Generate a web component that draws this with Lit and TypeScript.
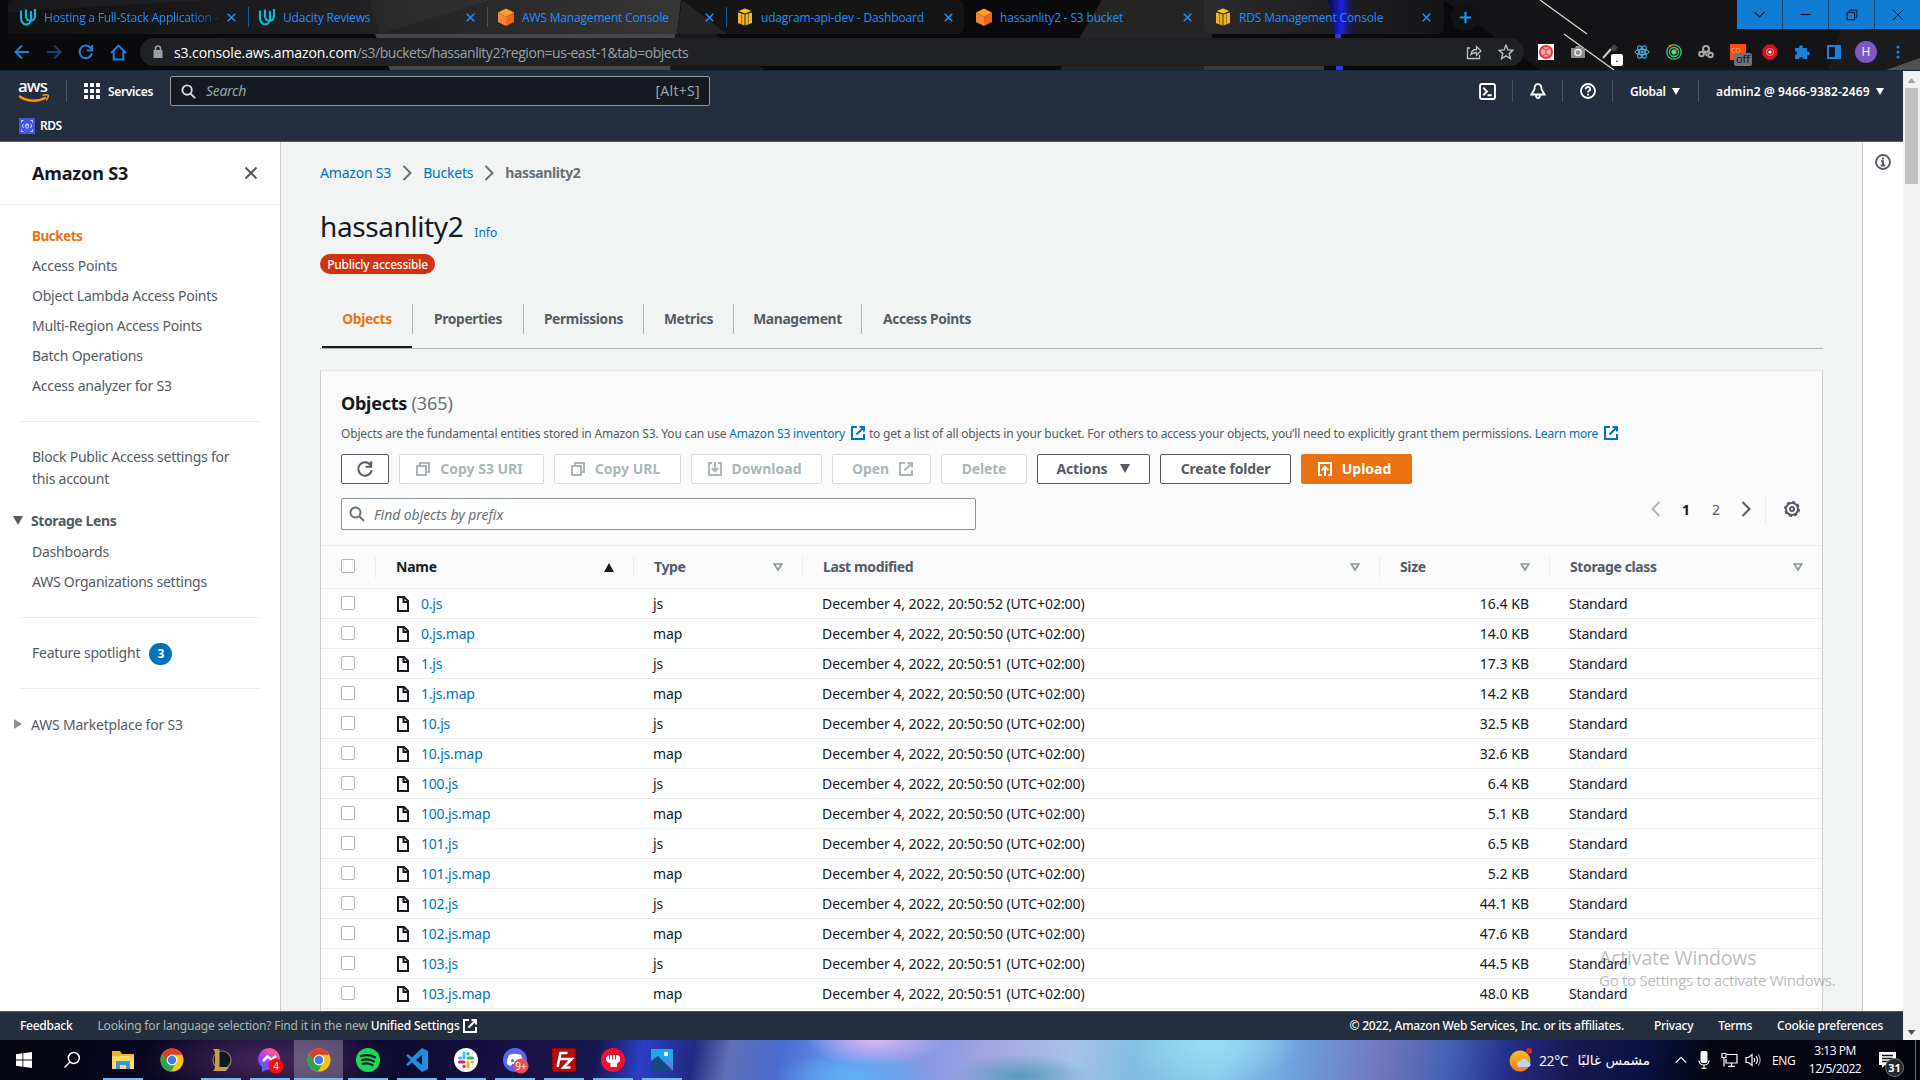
import { LitElement, html, svg, css } from "lit";
import { customElement } from "lit/decorators.js";

const stroke = (d: string, size = 16, width = 2) => html`<svg class="ic" width=${size} height=${size} viewBox="0 0 16 16" fill="none" stroke="currentColor" stroke-width=${width}><path d=${d}></path></svg>`;

const P = {
  external: "M7 2H2v12h12V9M9.5 2H14v4.5M14 2L6.5 9.5",
  copy: "M2 5h9v9H2zM5 5V2h9v9h-3",
  download: "M5 2H2v12h12V2h-3M8 1v9M4.7 7L8 10.3 11.300 7",
  upload: "M5 14H2V2h12v12h-3M8 15V6M4.700 9.200L8 6l3.300 3.200",
  close: "M2.500 2.500l11 11M13.500 2.500l-11 11",
  right: "M4.500 1l7 7-7 7",
  left: "M11.500 1l-7 7 7 7",
  search: "M6.500 1.500a5 5 0 1 0 0 10 5 5 0 0 0 0-10zM10.200 10.200L15 15",
};

const shared = css`
  * { box-sizing: border-box; }
  :host { font-family: "Noto Sans", "Open Sans", sans-serif; }
  .row { display: flex; align-items: center; }
  .ic { display: block; flex: none; }
  .grow { flex: 1; }
`;

/* Browser frame: tabs, toolbar */

const favicon = (kind: string) => {
  if (kind === "udacity") return html`<svg class="ic" width="18" height="18" viewBox="0 0 18 18" fill="none" stroke="#12b5da" stroke-width="2.200"><path d="M2 2.500v7c0 4.500 2.500 7 5 7s5-2 5-6V3"></path><path d="M7 1.500v6.500c0 3 2 4.800 4.500 4.800S16 11 16 8V1"></path></svg>`;
  if (kind === "cube") return html`<svg class="ic" width="18" height="18" viewBox="0 0 18 18"><path d="M9 .5l8 4L9 9 1 4.500z" fill="#ff9d2e"></path><path d="M1 4.500L9 9v9l-8-4z" fill="#f58536"></path><path d="M17 4.500L9 9v9l8-4z" fill="#f0641e"></path></svg>`;
  return html`<svg class="ic" width="18" height="18" viewBox="0 0 18 18"><path d="M9 .5L15.500 3 9 5.500 2.500 3z" fill="#ffc400"></path><path d="M2 4.500l3.500 1v11L2 15zM16 4.500l-3.500 1v11L16 15z" fill="#f3b32a"></path><path d="M5.800 5.500l2.800 1v11l-2.800-1zM12.200 5.500l-2.800 1v11l2.800-1z" fill="#f0ad25"></path></svg>`;
};

const tabs = [
  ["udacity", "Hosting a Full-Stack Application -"],
  ["udacity", "Udacity Reviews"],
  ["cube", "AWS Management Console"],
  ["box", "udagram-api-dev - Dashboard"],
  ["cube", "hassanlity2 - S3 bucket"],
  ["box", "RDS Management Console"],
];

@customElement("browser-frame")
class BrowserFrame extends LitElement {
  static styles = [shared, css`
    :host { display: block; position: relative; height: 71px; background: #0a090b; border-bottom: 1px solid #0c2a41; overflow: hidden; font-family: "Open Sans", "Noto Sans", sans-serif; }
    .art { position: absolute; inset: 0; }
    .strip { position: relative; height: 34px; padding-left: 10px; }
    .tab { width: 239px; height: 34px; padding: 0 8px 0 9px; color: #1e90ff; font-size: 12px; flex: none; position: relative; }
    .tab.sep::after { content: ""; position: absolute; right: 0; top: 7px; width: 1px; height: 20px; background: #14609f; }
    .label { margin-left: 7px; width: 176px; white-space: nowrap; overflow: hidden; letter-spacing: -0.17px; }
    .fade { -webkit-mask-image: linear-gradient(90deg, #000 145px, transparent 185px); letter-spacing: -0.22px; }
    .x { margin-left: 6px; color: #1b8ff0; }
    .plus { width: 28px; height: 28px; margin-left: 7px; border-radius: 50%; background: #111214; color: #1e90ff; display: flex; align-items: center; justify-content: center; }
    .win { align-self: flex-start; gap: 1px; background: #0a4676; height: 29px; }
    .win span { width: 45px; height: 29px; background: #0f7dd3; display: flex; align-items: center; justify-content: center; color: #06111c; }
    .bar { position: relative; height: 36px; padding: 0 14px; color: #1a82d8; }
    .nav { width: 126px; gap: 16px; }
    .omni { height: 28px; width: 1384px; border-radius: 14px; background: #202124; padding: 0 10px 0 11px; font-size: 14px; color: #9aa0a6; letter-spacing: -0.46px; }
    .omni b { font-weight: 400; color: #fff; letter-spacing: -0.1px; }
    .url { margin-left: 9px; white-space: nowrap; }
    .ends { color: #bdc1c6; gap: 16px; }
    .ext { margin-left: 14px; gap: 16px; }
    .ext > * { width: 16px; height: 16px; flex: none; position: relative; }
    .badge { position: absolute; left: 9px; top: 10px; width: 12px; height: 12px; border-radius: 2px; background: #fff; color: #000; font: 700 8px/9px "Open Sans", sans-serif; text-align: center; }
    .off { left: 4px; top: 9px; width: 18px; height: 13px; background: #6f7378; color: #111; font: 11px/12px "Open Sans", sans-serif; }
    .face { width: 22px; height: 22px; margin: 0 -3px; border-radius: 50%; background: #7e57c2; color: #fff; font-size: 12px; line-height: 22px; text-align: center; }
  `];
  render() {
    return html`
      <svg class="art" width="1920" height="70" viewBox="0 0 1920 70">
        <defs>
          <linearGradient id="g1"><stop offset="0" stop-color="#111113"></stop><stop offset=".5" stop-color="#202022"></stop><stop offset="1" stop-color="#363637"></stop></linearGradient>
          <linearGradient id="g2"><stop offset="0" stop-color="#2b2b2d"></stop><stop offset="1" stop-color="#151416"></stop></linearGradient>
          <linearGradient id="g3"><stop offset="0" stop-color="#0b0a35"></stop><stop offset=".45" stop-color="#1a22e8"></stop><stop offset="1" stop-color="#130f30" stop-opacity="0"></stop></linearGradient>
        </defs>
        <path d="M375 34h305l-10 36H390z" fill="#474748"></path>
        <path d="M675 34h40l50 36h-95z" fill="#19191a"></path>
        <path d="M8 34V8q0-8 8-8h665l-4 34z" fill="url(#g1)"></path>
        <path d="M8 12l200-12H8zM370 0h120l-110 34z" fill="#fff" fill-opacity=".035"></path>
        <path d="M682 0h274q8 0 8 8v18q0 8-8 8H677z" fill="#151516"></path>
        <path d="M682 0l45 34h-50z" fill="#242425"></path>
        <path d="M1102 0h110v70h-152z" fill="#252526"></path>
        <path d="M1204 0h240v28q-1 6-8 6h-224q-8 0-8-8z" fill="url(#g2)"></path>
        <path d="M1204 66h120v4h-120z" fill="#39393a"></path>
        <path d="M1328 0h26l4 34h-24z" fill="url(#g3)"></path>
        <path d="M1335 34h6l2 36h-7z" fill="#3238e8"></path>
        <path d="M1444 0h476v70h-380z" fill="#141416"></path>
        <path d="M1850 0h70v70h-92z" fill="#1b1b1d"></path>
        <path d="M1886 70l34-12v12z" fill="#515152"></path>
        <path d="M1540 0l47 34M1564 34l50 36" stroke="#d6d6d6" stroke-width="1.300" fill="none"></path>
      </svg>
      <div class="strip row">
        ${tabs.map(([icon, label], i) => html`<div class="tab row ${i < 3 ? "sep" : ""}">
          ${favicon(icon)}<span class="label ${i === 0 ? "fade" : ""}">${label}</span><span class="x">${stroke(P.close, 11, 2.4)}</span></div>`)}
        <span class="plus">${stroke("M8 1v14M1 8h14", 13, 2.6)}</span>
        <span class="grow"></span>
        <div class="win row">
          <span>${stroke("M2 5l6 6 6-6", 13, 1.3)}</span><span>${stroke("M2 8h12", 13, 1.4)}</span>
          <span>${stroke("M1.500 4.500h10v10h-10zM4.500 4.500v-3h10v10h-3", 12, 1.3)}</span><span>${stroke("M1 1l14 14M15 1L1 15", 12, 1.2)}</span>
        </div>
      </div>
      <div class="bar row">
        <div class="nav row">
          ${stroke("M15 8H2M8 1.500L1.500 8 8 14.500", 16, 2)}
          <span style="opacity:.5">${stroke("M1 8h13M8 1.500L14.500 8 8 14.500", 16, 2)}</span>
          ${stroke("M13.500 5A6.300 6.300 0 1 0 14 9.500M14.200 1v5.500H8.800", 16, 2)}
          ${stroke("M1 8.500L8 1.500l7 7M3.500 7v7.500h9V7", 17, 1.9)}
        </div>
        <div class="omni row">
          <svg class="ic" width="14" height="14" viewBox="0 0 14 14"><path d="M2.500 5h9v8h-9z" fill="#9aa0a6"></path><path d="M4.500 6V3.500a2.500 2.500 0 0 1 5 0V6" stroke="#9aa0a6" stroke-width="1.500" fill="none"></path></svg>
          <span class="url"><b>s3.console.aws.amazon.com</b>/s3/buckets/hassanlity2?region=us-east-1&amp;tab=objects</span>
          <span class="grow"></span>
          <div class="ends row">
            ${stroke("M4 4H1.500v10.500h12V11M5 10.500c.3-3.500 2-5 5.500-5V2.500L15 7l-4.500 4.300V8.500C8 8.500 6.500 9 5 10.500z", 16, 1.3)}
            ${stroke("M8 1.200l2 4.700 5 .4-3.800 3.300 1.200 4.900L8 11.800l-4.400 2.700 1.200-4.900L1 6.300l5-.4z", 16, 1.400)}
          </div>
        </div>
        <div class="ext row">
          <svg viewBox="0 0 16 16"><path fill="#fff" d="M0 0h16v16H0z"></path><circle cx="8" cy="8" r="6" fill="#f6a6a6" stroke="#e33a3a" stroke-width="2"></circle><path d="M4.500 4.500q3.500 3 7 0M4.500 11.500q3.500-3 7 0M8 6.500v3" stroke="#e23434" stroke-width="1" fill="none"></path></svg>
          <svg viewBox="0 0 16 16"><path d="M1 4h4l1-2h4l1 2h4v10H1z" fill="#8d8d8f"></path><circle cx="8" cy="8.500" r="3" fill="none" stroke="#eee" stroke-width="1.500"></circle></svg>
          <span><svg class="ic" width="16" height="16" viewBox="0 0 16 16"><path d="M1 14l8-9" stroke="#ccc" stroke-width="2"></path><path d="M8 4l4-4 4 4-4 4z" fill="#444"></path></svg><span class="badge">.</span></span>
          <svg viewBox="0 0 16 16" fill="none" stroke="#4fc3f0"><ellipse cx="8" cy="8" rx="7" ry="2.700"></ellipse><ellipse cx="8" cy="8" rx="7" ry="2.700" transform="rotate(60 8 8)"></ellipse><ellipse cx="8" cy="8" rx="7" ry="2.700" transform="rotate(120 8 8)"></ellipse><circle cx="8" cy="8" r="1" fill="#4fc3f0"></circle></svg>
          <svg viewBox="0 0 16 16" fill="none" stroke="#3fce7a" stroke-width="1.300"><circle cx="8" cy="8" r="7.200"></circle><circle cx="8" cy="8" r="4.500"></circle><circle cx="8" cy="8" r="2" fill="#5df09a"></circle><circle cx="4" cy="2" r="1.300" fill="#ff6a2a" stroke="none"></circle><circle cx="11" cy="5" r="1.200" fill="#ff6a2a" stroke="none"></circle></svg>
          <svg viewBox="0 0 16 16" fill="none" stroke="#a9a9ab" stroke-width="2"><circle cx="3.500" cy="10" r="2.300"></circle><circle cx="8" cy="5" r="3"></circle><circle cx="12.500" cy="11" r="2.300"></circle><path d="M6 7l3 5M10 7l3 2" stroke-width="1.500"></path></svg>
          <span><svg class="ic" width="16" height="16" viewBox="0 0 16 16"><path fill="#ff4b0f" d="M0 0h16v16H0z"></path><text x="1" y="9" font-size="9" fill="#ff9b6a">co</text></svg><span class="badge off">off</span></span>
          <svg viewBox="0 0 16 16"><path d="M5 .500h6L15.500 5v6L11 15.500H5L.500 11V5z" fill="#d3141c"></path><circle cx="8" cy="8" r="3.600" fill="none" stroke="#fff" stroke-opacity=".5"></circle><circle cx="8" cy="8" r="1.600" fill="#fff"></circle></svg>
          <svg viewBox="0 0 16 16" fill="#1a82d8"><path d="M1 4h4.200a2 2 0 1 1 3.600 0H13v3.700a2 2 0 1 1 0 3.600V15H9.200a2 2 0 0 0-4 0H1v-4a2 2 0 0 0 0-4z"></path></svg>
          <svg viewBox="0 0 16 16"><path d="M2 2h12v12H2z" fill="none" stroke="#1a82d8" stroke-width="2"></path><path d="M9 2h5v12H9z" fill="#1a82d8"></path></svg>
          <span class="face">H</span>
          <svg viewBox="0 0 16 16" fill="#1a82d8"><circle cx="8" cy="3" r="1.600"></circle><circle cx="8" cy="8" r="1.600"></circle><circle cx="8" cy="13" r="1.600"></circle></svg>
        </div>
      </div>`;
  }
}

/* AWS console header */

@customElement("console-header")
class ConsoleHeader extends LitElement {
  static styles = [shared, css`
    :host { display: block; height: 71px; background: #232f3e; border-bottom: 1px solid #545b64; color: #fff; font-size: 12px; font-weight: 600; }
    .top { height: 40px; padding-left: 18px; }
    .line { width: 1px; height: 22px; background: #48535f; flex: none; }
    .services { margin: 0 17px 0 8px; width: 45px; white-space: nowrap; letter-spacing: -0.35px; }
    .search { width: 540px; height: 30px; border: 1px solid #8f9a9b; border-radius: 2px; background: #161922; padding: 0 9px 0 10px; font-size: 14px; font-weight: 400; color: #95a5a6; }
    .search i, .search span { padding-bottom: 2px; }
    .search i { margin-left: 10px; letter-spacing: -0.3px; }
    .key { letter-spacing: 0.3px; }
    .search .ic { color: #d5dbdb; }
    .tool { width: 49px; display: flex; justify-content: center; }
    .txt { white-space: nowrap; letter-spacing: -0.3px; }
    .account { width: 155px; letter-spacing: 0.12px; }
    .caret { width: 0; height: 0; border: 4px solid transparent; border-top: 7px solid #fff; border-bottom: 0; margin-left: 7px; }
    .fav { height: 30px; padding-left: 19px; gap: 5px; letter-spacing: -0.5px; }
    .fav span { padding-bottom: 1px; }
  `];
  render() {
    return html`
      <div class="top row">
        <svg class="ic" width="32" height="24" viewBox="0 0 32 24" overflow="visible"><text x="0" y="13" font-size="17" font-weight="500" textLength="30" fill="#fff" font-family="Noto Sans">aws</text><path d="M1 17c8 6 19 6 27 1.500" stroke="#ff9900" stroke-width="2.200" fill="none"></path><path d="M24.500 16.500c3-1 5-1 5.500-.3s-.2 3-1.800 5" stroke="#ff9900" stroke-width="1.600" fill="none"></path></svg>
        <span class="line" style="margin:0 17px 0 16px"></span>
        <svg class="ic" width="16" height="16" viewBox="0 0 16 16" fill="#fff">${[0, 6, 12].map(y => [0, 6, 12].map(x => svg`<rect x=${x} y=${y} width="4" height="4" rx=".5"></rect>`))}</svg>
        <span class="services">Services</span>
        <div class="search row">${stroke(P.search, 15, 2)}<i>Search</i><span class="grow"></span><span class="key">[Alt+S]</span></div>
        <span class="grow"></span>
        <span class="tool"><svg class="ic" width="17" height="17" viewBox="0 0 16 16" fill="none" stroke="#fff" stroke-width="1.800"><rect x="1" y="1" width="14" height="14" rx="1.500"></rect><path d="M4 4.500L7.500 8 4 11.500M8 11.500h4"></path></svg></span>
        <span class="line"></span>
        <span class="tool"><svg class="ic" width="16" height="16" viewBox="0 0 16 16" fill="none" stroke="#fff" stroke-width="1.800"><path d="M8 1.200c-3 0-3.500 2-3.500 5L1.500 11.500h13l-3-5.300c0-3-.500-5-3.500-5zM6 12c0 4 4 4 4 0"></path></svg></span>
        <span class="line"></span>
        <span class="tool"><svg class="ic" width="16" height="16" viewBox="0 0 16 16" fill="none" stroke="#fff" stroke-width="1.800"><circle cx="8" cy="8" r="7"></circle><path d="M5.700 6.300c0-3.300 4.800-2.800 4.500 0C10 8 8 7.700 8 9.500M8 10.800v1.600"></path></svg></span>
        <span class="line"></span>
        <span class="txt" style="width:35px;margin-left:17px">Global</span><span class="caret"></span>
        <span class="line" style="margin:0 17px 0 18px"></span>
        <span class="txt account">admin2 @ 9466-9382-2469</span><span class="caret" style="margin-right:19px;margin-left:5px"></span>
      </div>
      <div class="fav row">
        <svg class="ic" width="16" height="16" viewBox="0 0 16 16"><path fill="#4257e6" d="M0 0h16v16H0z"></path><g fill="none" stroke="#dfe4ff" stroke-width=".9"><path d="M2.500 4.500v-2h2M11.500 2.500h2v2M2.500 11.500v2h2M11.500 13.500h2v-2M4.500 6l-1.200 2 1.200 2M11.500 6l1.200 2-1.200 2"></path><ellipse cx="8" cy="6.500" rx="1.400" ry=".7"></ellipse><path d="M6.600 6.500v3c0 .9 2.800.9 2.800 0v-3"></path></g></svg>
        <span>RDS</span>
      </div>`;
  }
}

/* Left navigation */

@customElement("side-nav")
class SideNav extends LitElement {
  static styles = [shared, css`
    :host { display: block; width: 281px; flex: none; background: #fff; border-right: 1px solid #c9cfcf; color: #545b64; font-size: 14px; letter-spacing: -0.23px; }
    .head { height: 63px; padding: 0 21px 0 32px; border-bottom: 1px solid #eaeded; color: #16191f; font-size: 18px; font-weight: 700; letter-spacing: -0.15px; margin-bottom: 16px; }
    .head span { padding-bottom: 1px; }
    .head .ic { color: #545b64; }
    .item { height: 30px; line-height: 30px; padding-left: 32px; white-space: nowrap; }
    .on { color: #ec7211; font-weight: 700; font-size: 13.500px; letter-spacing: -0.5px; }
    hr { border: 0; height: 1px; background: #eaeded; margin: 20px 20px; }
    .two { padding: 4px 0 0 32px; line-height: 22px; margin-bottom: 15px; }
    .group { height: 31px; gap: 8px; padding-left: 13px; font-weight: 700; letter-spacing: -0.4px; margin-bottom: 1px; }
    .plain { font-weight: 400; height: 30px; letter-spacing: -0.2px; }
    .n { display: inline-block; width: 23px; height: 22px; line-height: 22px; border-radius: 11px; background: #0073bb; color: #fff; font-size: 12px; font-weight: 700; text-align: center; margin-left: 9px; }
  `];
  render() {
    return html`
      <div class="head row"><span class="grow">Amazon S3</span>${stroke(P.close, 16, 2)}</div>
      <div class="item on">Buckets</div>
      ${["Access Points", "Object Lambda Access Points", "Multi-Region Access Points", "Batch Operations", "Access analyzer for S3"].map(t => html`<div class="item">${t}</div>`)}
      <hr>
      <div class="two">Block Public Access settings for<br>this account</div>
      <div class="group row"><svg class="ic" width="10" height="9" viewBox="0 0 10 9"><path d="M0 0h10L5 9z" fill="#545b64"></path></svg>Storage Lens</div>
      <div class="item">Dashboards</div><div class="item">AWS Organizations settings</div>
      <hr>
      <div class="item">Feature spotlight<span class="n">3</span></div>
      <hr>
      <div class="group plain row"><svg class="ic" width="10" height="10" viewBox="0 0 10 10"><path d="M1 0v10l8-5z" fill="#879596"></path></svg>AWS Marketplace for S3</div>`;
  }
}

/* Objects table */

const objects: [string, string, string][] = [
  ["0.js", "52", "16.4"], ["0.js.map", "50", "14.0"], ["1.js", "51", "17.3"], ["1.js.map", "50", "14.2"],
  ["10.js", "50", "32.5"], ["10.js.map", "50", "32.6"], ["100.js", "50", "6.4"], ["100.js.map", "50", "5.1"],
  ["101.js", "50", "6.5"], ["101.js.map", "50", "5.2"], ["102.js", "50", "44.1"], ["102.js.map", "50", "47.6"],
  ["103.js", "51", "44.5"], ["103.js.map", "51", "48.0"],
];

@customElement("object-table")
class ObjectTable extends LitElement {
  static styles = [shared, css`
    :host { display: block; font-size: 14px; color: #16191f; }
    .line { display: grid; grid-template-columns: 55px 258px 169px 577px 170px 1fr; height: 30px; border-bottom: 1px solid #eaeded; background: #fff; align-items: center; white-space: nowrap; }
    .head { height: 44px; border-top: 1px solid #eaeded; background: #fafafa; color: #545b64; font-weight: 700; }
    .head > div { height: 21px; border-right: 1px solid #eaeded; padding: 0 19px 0 20px; display: flex; align-items: center; justify-content: space-between; letter-spacing: -0.38px; }
    .head > div:last-child { border: 0; padding-right: 19px; }
    .head > div span { padding-bottom: 1px; }
    .head .name { color: #16191f; letter-spacing: -0.2px; }
    .line > .sel { padding-left: 20px; }
    .box { width: 14px; height: 14px; border: 1px solid #aab7b8; border-radius: 2px; background: #fff; display: block; margin-top: -1px; }
    .head .box { margin-top: -2px; padding: 0; }
    .cell { padding-left: 19px; letter-spacing: -0.05px; }
    .std { letter-spacing: -0.18px; }
    .key { padding-left: 20px; color: #0073bb; display: flex; align-items: center; gap: 11px; letter-spacing: -0.2px; }
    .num { text-align: right; padding-right: 21px; }
  `];
  tri = html`<svg class="ic" width="10" height="8" viewBox="0 0 10 8"><path d="M1.300 1h7.400L5 7z" fill="none" stroke="#879596" stroke-width="1.700"></path></svg>`;
  render() {
    return html`
      <div class="line head">
        <div class="sel"><span class="box"></span></div>
        <div class="name"><span>Name</span><svg class="ic" width="10" height="9" viewBox="0 0 10 9"><path d="M0 9h10L5 0z" fill="#16191f"></path></svg></div>
        ${["Type", "Last modified", "Size", "Storage class"].map(t => html`<div><span>${t}</span>${this.tri}</div>`)}
      </div>
      ${objects.map(([name, sec, size]) => html`<div class="line">
        <div class="sel"><span class="box"></span></div>
        <div class="key"><svg class="ic" width="14" height="16" viewBox="0 0 14 16" fill="none" stroke="#16191f" stroke-width="2"><path d="M2 1h6l4 4v10H2zM7.500 1v5H12"></path></svg>${name}</div>
        <div class="cell">${name.endsWith("map") ? "map" : "js"}</div>
        <div class="cell">December 4, 2022, 20:50:${sec} (UTC+02:00)</div>
        <div class="num">${size} KB</div>
        <div class="cell std">Standard</div></div>`)}
      <div class="line"></div>`;
  }
}

@customElement("bucket-page")
class BucketPage extends LitElement {
  static styles = [shared, css`
    :host { display: block; flex: 1; height: 869px; overflow: hidden; background: #f2f4f4; padding: 19px 39px 0 39px; color: #545b64; font-size: 14px; }
    a { color: #0073bb; }
    .crumbs { height: 22px; gap: 8px; margin-bottom: 25px; letter-spacing: -0.2px; }
    .crumbs .ic { color: #687078; position: relative; top: 1px; }
    .crumbs b { letter-spacing: -0.4px; color: #687078; }
    .title { height: 36px; display: flex; align-items: baseline; gap: 11px; line-height: 36px; font-size: 28px; color: #16191f; letter-spacing: -0.4px; }
    .title a { font-size: 12px; letter-spacing: 0; }
    .pill { display: flex; align-items: center; justify-content: center; width: 115px; height: 20px; margin-top: 10px; border-radius: 10px; background: #d13212; color: #fff; font-size: 12px; font-weight: 500; letter-spacing: -0.25px; }
    .tabs { display: flex; height: 59px; margin-top: 16px; border-bottom: 1px solid #aab7b8; padding-left: 2px; }
    .tabs span { display: flex; align-items: center; justify-content: center; height: 30px; margin-top: 14px; padding-bottom: 2px; border-right: 1px solid #aab7b8; font-weight: 700; font-size: 13.800px; letter-spacing: -0.35px; white-space: nowrap; }
    .tabs span:last-child { border: 0; }
    .tabs .on { color: #ec7211; position: relative; }
    .tabs .on::after { content: ""; position: absolute; left: 0; right: 0; top: 42px; height: 2px; background: #16191f; }
    .card { margin-top: 21px; border: 1px solid #c9cfcf; border-top-color: #e3e7e7; background: #fafafa; }
    .head { padding: 20px 20px 0; height: 174px; }
    h2 { margin: 0; font-size: 18px; line-height: 24px; color: #16191f; letter-spacing: -0.25px; }
    h2 span { font-weight: 400; color: #687078; letter-spacing: -0.1px; }
    .desc { height: 18px; margin: 9px 0 12px; font-size: 12px; white-space: nowrap; letter-spacing: -0.18px; }
    .desc .ic { margin: 0 3px 0 5px; color: #0073bb; }
    .desc a, .desc span { white-space: pre; }
    .buttons { display: flex; gap: 10px; }
    .btn { height: 30px; border: 1px solid #545b64; border-radius: 2px; background: #fff; display: flex; align-items: center; justify-content: center; gap: 9px; font-weight: 700; white-space: nowrap; letter-spacing: -0.15px; padding-bottom: 1px; }
    .dis { color: #aab7b8; border-color: #d5dbdb; }
    .lead { padding-right: 5px; letter-spacing: 0; }
    .trail { padding-left: 3px; }
    .acts { gap: 11px; }
    .up { background: #ec7211; border-color: #ec7211; color: #fff; }
    .filter { margin-top: 10px; align-items: flex-start; }
    .input { width: 635px; height: 32px; margin-top: 4px; border: 1px solid #879596; border-radius: 2px; background: #fff; padding-left: 7px; font-style: italic; color: #687078; gap: 9px; letter-spacing: -0.07px; }
    .pages { height: 30px; }
    .pages span { width: 30px; text-align: center; display: flex; justify-content: center; }
    .pages .cur { font-weight: 700; color: #16191f; }
    .gear { margin: 0 2px 0 18px; }
    .bar { width: 1px; height: 30px; background: #eaeded; margin-left: 4px; }
  `];
  render() {
    const btn = (w: number, label: unknown, cls = "") => html`<span class="btn ${cls}" style="width:${w}px">${label}</span>`;
    const tab = (w: number, t: string, cls = "") => html`<span class=${cls} style="width:${w}px">${t}</span>`;
    return html`
      <div class="crumbs row"><a>Amazon S3</a>${stroke(P.right, 16, 2)}<a>Buckets</a>${stroke(P.right, 16, 2)}<b>hassanlity2</b></div>
      <div class="title">hassanlity2<a>Info</a></div>
      <div class="pill">Publicly accessible</div>
      <div class="tabs">${tab(91, "Objects", "on")}${tab(111, "Properties")}${tab(120, "Permissions")}${tab(90, "Metrics")}${tab(128, "Management")}${tab(130, "Access Points")}</div>
      <div class="card">
        <div class="head">
          <h2>Objects <span>(365)</span></h2>
          <div class="desc row"><span>Objects are the fundamental entities stored in Amazon S3. You can use </span><a>Amazon S3 inventory</a>${stroke(P.external, 16, 2)}<span>to get a list of all objects in your bucket. For others to access your objects, you’ll need to explicitly grant them permissions. </span><a>Learn more</a>${stroke(P.external, 16, 2)}</div>
          <div class="buttons">
            ${btn(48, stroke("M13 4.500A6 6 0 1 0 14 9M13.500 1v5H8.500", 18, 1.8))}
            ${btn(145, html`${stroke(P.copy, 16, 2)}Copy S3 URI`, "dis lead")}
            ${btn(127, html`${stroke(P.copy, 16, 2)}Copy URL`, "dis lead")}
            ${btn(131, html`${stroke(P.download, 16, 2)}Download`, "dis lead")}
            ${btn(99, html`Open${stroke(P.external, 16, 2)}`, "dis trail")}
            ${btn(86, "Delete", "dis")}
            ${btn(113, html`Actions<svg class="ic" width="12" height="9" viewBox="0 0 12 9"><path d="M1 0h10L6 9z" fill="#545b64"></path></svg>`, "acts")}
            ${btn(131, "Create folder")}
            ${btn(111, html`${stroke(P.upload, 16, 2)}Upload`, "up lead")}
          </div>
          <div class="filter row">
            <div class="input row">${stroke(P.search, 16, 2)}Find objects by prefix</div>
            <span class="grow"></span>
            <div class="pages row">
              <span style="color:#aab7b8">${stroke(P.left, 16, 2)}</span><span class="cur">1</span><span>2</span><span>${stroke(P.right, 16, 2)}</span>
              <i class="bar"></i>
              <svg class="ic gear" width="16" height="16" viewBox="0 0 16 16" fill="none" stroke="#545b64"><circle cx="8" cy="8" r="6" stroke-width="2"></circle><circle cx="8" cy="8" r="7.200" stroke-width="1.600" stroke-dasharray="3.200 2.450"></circle><circle cx="8" cy="8" r="2" stroke-width="2"></circle></svg>
            </div>
          </div>
        </div>
        <object-table></object-table>
      </div>`;
  }
}

/* Windows taskbar */

const chrome = svg`<circle cx="12" cy="12" r="11.500" fill="#fbc116"></circle><path d="M12 .5A11.500 11.500 0 0 1 22.200 6.800H12L7 14.500 2 6.300A11.500 11.500 0 0 1 12 .5z" fill="#e33b2e"></path><path d="M2 6.300A11.500 11.500 0 0 0 11 23.400l5-9L7.500 14.500z" fill="#2ba24c"></path><circle cx="12" cy="12" r="5.400" fill="#fff"></circle><circle cx="12" cy="12" r="4.200" fill="#3b7ded"></circle>`;

const apps = [
  svg`<path d="M1 3h8l2 3h12v15H1z" fill="#f2b12c"></path><path d="M1 8h22v13H1z" fill="#ffd968"></path><path d="M5 21v-8h14v8h-4v-4H9v4z" fill="#3a97dd"></path>`,
  chrome,
  svg`<circle cx="13" cy="12" r="9" fill="#071a26" stroke="#a9813c" stroke-width="1.200"></circle><path d="M4 1h6.500v18H20l-3 4H4l2-3V4z" fill="#c99b4a"></path>`,
  svg`<defs><linearGradient id="m" x1="0" y1="1" x2=".6" y2="0"><stop offset="0" stop-color="#1a86ff"></stop><stop offset=".5" stop-color="#a33bff"></stop><stop offset="1" stop-color="#ff5f86"></stop></linearGradient></defs><path d="M12 0a12 11 0 0 0-8 19v5l4-2.300A12 11 0 1 0 12 0z" fill="url(#m)"></path><path d="M5 13l4.500-4.500 4 3L18 8" stroke="#fff" stroke-width="2.500" fill="none"></path><circle cx="18" cy="18" r="7.500" fill="#f5100c"></circle><text x="18" y="21.500" text-anchor="middle" font-size="10" fill="#fff">4</text>`,
  chrome,
  svg`<circle cx="12" cy="12" r="12" fill="#1ed760"></circle><path d="M5 8c5-1.500 10-1 14 1.300M6 12.200c4-1.200 8.500-.8 12 1.200M6.500 16c3.500-1 7-.6 10 1" stroke="#0c1f14" stroke-width="2.200" fill="none" stroke-linecap="round"></path>`,
  svg`<path d="M17 0l6 3v18l-6 3L7 14.500 3 18l-2-1.500L5.500 12 1 7.500 3 6l4 3.500zM17 7l-6 5 6 5z" fill="#1f8fdc"></path>`,
  svg`<circle cx="12" cy="12" r="12" fill="#fff"></circle><g stroke-width="3" stroke-linecap="round"><path d="M10 5v5" stroke="#36c5f0"></path><path d="M5.500 10H7" stroke="#36c5f0"></path><path d="M14 10h4.500" stroke="#2eb67d"></path><path d="M14 5.500V6" stroke="#2eb67d"></path><path d="M14 14v5" stroke="#ecb22e"></path><path d="M18 14h.500" stroke="#ecb22e"></path><path d="M5.500 14H10" stroke="#e01e5a"></path><path d="M10 18v.500" stroke="#e01e5a"></path></g>`,
  svg`<circle cx="12" cy="12" r="12" fill="#5865f2"></circle><path d="M6 7q6-2.500 12 0 2.500 5 2 9-2 1.500-4 2l-1-2h-6l-1 2q-2-.5-4-2-.5-4 2-9z" fill="#fff"></path><circle cx="9.500" cy="12.500" r="1.500" fill="#5865f2"></circle><circle cx="18" cy="18" r="7.500" fill="#ef4d4d"></circle><text x="18" y="21.500" text-anchor="middle" font-size="10" fill="#fff">9+</text>`,
  svg`<path d="M0 0h24v24H0z" fill="#b30d0d"></path><path d="M0 0h24v24H0z" fill="none" stroke="#600" stroke-width="1.500" stroke-dasharray="2 1.500"></path><path d="M5.500 19L8.500 5h7M7.500 11h6M12.500 11h7l-8 8.500h7" stroke="#fff" stroke-width="2.600" fill="none"></path>`,
  svg`<circle cx="12" cy="12" r="12" fill="#ee1230"></circle><path d="M5 9.500L8 7h9l2 2v4l-3 2.500V19H9.500v-4L7 14.500 5 12z" fill="#fff"></path><path d="M8.500 7v4.500M11.500 7v4.500M14.500 7v4.500" stroke="#ee1230" stroke-width=".9"></path>`,
  svg`<path d="M1 1h22v22H1z" fill="#21a4ea"></path><path d="M13 14l4-3 6 5v7h-6z" fill="#5b80e0"></path><path d="M1 13l7-5 15 15H1z" fill="#134a86"></path><circle cx="16" cy="6" r="2.200" fill="#fff"></circle>`,
];

@customElement("task-bar")
class TaskBar extends LitElement {
  static styles = [shared, css`
    :host {
      display: flex; height: 40px; color: #fff; font-family: "Open Sans", "Noto Sans", sans-serif; font-size: 12px;
      background:
        radial-gradient(ellipse 70px 26px at 875px 0, #dcb8f2 0, transparent 100%),
        radial-gradient(ellipse 80px 26px at 855px 36px, #5fb2f2 0, transparent 100%),
        radial-gradient(ellipse 70px 22px at 1020px 36px, #559cbc 0, transparent 100%),
        radial-gradient(ellipse 90px 40px at 1210px 4px, #98dcf4 0, transparent 100%),
        radial-gradient(ellipse 130px 40px at 270px 20px, #45265c 0, transparent 100%),
        linear-gradient(100deg, #04040f 0, #080722 160px, #150f35 300px, #0b0a2c 370px, #1a1145 520px, #171852 590px, #2c3ec6 635px, #222a82 685px, #5f6fb6 720px, #4a6bd0 770px, #6491ee 830px, #8e9ae4 930px, #a7a8e0 985px, #a6c2ea 1060px, #80bce0 1120px, #8acdec 1200px, #6c9bdc 1290px, #7276bc 1365px, #4461b4 1430px, #232e88 1490px, #1a1850 1550px, #0a1244 1620px, #04040f 1690px, #060616 1800px, #03030c 100%);
    }
    .start { width: 48px; display: flex; align-items: center; justify-content: center; }
    .find { margin-right: 2px; }
    .app { position: relative; width: 49px; height: 40px; display: flex; align-items: center; justify-content: center; }
    .app::after { content: ""; position: absolute; left: 5px; right: 4px; bottom: 0; height: 2px; background: #76b9ed; }
    .none::after { display: none; }
    .live { background: rgba(255, 255, 255, .25); }
    .live::after { left: 0; right: 0; }
    .tray { padding-right: 4px; white-space: nowrap; }
    .deg { font-size: 14px; letter-spacing: -0.4px; width: 30px; margin: 0 9px 0 6px; }
    .ar { font-size: 13.600px; width: 72px; direction: rtl; font-family: "DejaVu Sans", sans-serif; }
    .clock { width: 62px; text-align: center; line-height: 18px; letter-spacing: -0.5px; margin: 0 13px 0 8px; }
    .note { position: relative; width: 17px; height: 16px; }
    .count { position: absolute; left: 6px; top: 6px; width: 19px; height: 19px; border-radius: 50%; background: #25272c; border: 1px solid #777; font: 700 11px/17px "Open Sans", sans-serif; text-align: center; }
    .peek { width: 1px; height: 40px; background: #6a6a78; margin-left: 19px; }
  `];
  render() {
    return html`
      <span class="start"><svg width="16" height="16" viewBox="0 0 16 16" fill="#fff"><path d="M0 2.300L6.500 1.300v6.200H0zM7.300 1.200L16 0v7.500H7.300zM0 8.400h6.500v6.300L0 13.800zM7.300 8.400H16V16l-8.700-1.200z"></path></svg></span>
      <span class="start find"><svg width="18" height="18" viewBox="0 0 18 18" fill="none" stroke="#fff" stroke-width="1.500"><circle cx="10.800" cy="7" r="5.500"></circle><path d="M7 11L1.500 16.500"></path></svg></span>
      ${apps.map((a, i) => html`<span class="app ${i === 4 ? "live" : ""} ${i === 1 ? "none" : ""}"><svg width="24" height="24" viewBox="0 0 24 24" overflow="visible">${a}</svg></span>`)}
      <span class="grow"></span>
      <div class="tray row">
        <svg class="ic" width="24" height="24" viewBox="0 0 24 24"><defs><linearGradient id="s" x1="0" y1="0" x2="0" y2="1"><stop offset="0" stop-color="#f9bd2c"></stop><stop offset="1" stop-color="#f07c18"></stop></linearGradient></defs><circle cx="11" cy="13" r="10.500" fill="url(#s)"></circle><path d="M11 19a3 3 0 0 1 .5-6 4 4 0 0 1 7.500 1 2.600 2.600 0 0 1 1 5z" fill="#bcd6fa"></path><circle cx="20" cy="3" r="3" fill="#d8291f"></circle></svg>
        <span class="deg">22°C</span><span class="ar">مشمس غالبًا</span>
        <span style="margin:0 10px 0 24px">${stroke("M2 11l6-6 6 6", 14, 1.5)}</span>
        <svg class="ic" width="12" height="18" viewBox="0 0 12 18"><rect x="2.500" y="0" width="7" height="12" rx="2" fill="#fff"></rect><path d="M1 9.500c0 6 10 6 10 0M6 14v3M3.500 17.300h5" stroke="#fff" fill="none" stroke-width="1.200"></path></svg>
        <svg class="ic" style="margin:0 7px 0 11px" width="17" height="16" viewBox="0 0 17 16" fill="none" stroke="#fff" stroke-width="1.200"><path d="M6 2.500h10v8.500H5V7M10.500 11v3M7 14.400h7M1 1.500h4v4H1zM3 5.500v9"></path></svg>
        <svg class="ic" width="17" height="16" viewBox="0 0 17 16" fill="none" stroke="#fff" stroke-width="1.200"><path d="M1 5.500h2.500L7 2.500v11l-3.500-3H1zM9 6q1.500 2 0 4M11 4q3 4 0 8"></path><path d="M13.200 2.300q4 5.700 0 11.400" stroke-opacity=".6"></path></svg>
        <span style="margin-left:10px;width:24px;letter-spacing:-.4px">ENG</span>
        <div class="clock">3:13 PM<br>12/5/2022</div>
        <div class="note"><svg class="ic" width="17" height="16" viewBox="0 0 17 16"><path d="M0 0h17v13H6l-3 3v-3H0z" fill="#fff"></path><path d="M3 3.500h11M3 6.500h11M3 9.500h7" stroke="#111" stroke-width="1.300"></path></svg><span class="count">31</span></div>
        <i class="peek"></i>
      </div>`;
  }
}

@customElement("app-root")
class AppRoot extends LitElement {
  static styles = [shared, css`
    :host { display: flex; flex-direction: column; position: relative; width: 1920px; height: 1080px; overflow: hidden; background: #fff; }
    .page { display: flex; height: 969px; }
    .console { width: 1903px; display: flex; flex-direction: column; }
    .body { display: flex; height: 869px; overflow: hidden; }
    .help { width: 41px; background: #fff; border-left: 1px solid #c9cfcf; padding: 12px 0 0 12px; color: #545b64; }
    .foot { height: 29px; background: #232f3e; border-top: 1px solid #545b64; color: #fff; font-size: 12px; font-weight: 500; padding: 0 20px 1px; letter-spacing: -0.25px; white-space: nowrap; }
    .hint { color: #aab7b8; margin: 0 0 0 25px; font-weight: 400; letter-spacing: -0.17px; white-space: pre; }
    .unified { letter-spacing: -0.15px; }
    .foot .link { margin-left: 25px; }
    .scroll { width: 17px; background: #f1f1f1; display: flex; flex-direction: column; align-items: center; justify-content: space-between; padding: 7px 0 5px; }
    .thumb { width: 13px; height: 96px; background: #c1c1c1; margin-top: 5px; }
    .mark { position: absolute; left: 1599px; top: 945px; color: rgba(120, 120, 120, .5); font: 15px/19px "Open Sans", sans-serif; white-space: nowrap; letter-spacing: -0.27px; }
    .mark div { font-size: 19.500px; line-height: 26px; letter-spacing: -0.17px; }
  `];
  render() {
    return html`
      <browser-frame></browser-frame>
      <div class="page">
        <div class="console">
          <console-header></console-header>
          <div class="body">
            <side-nav></side-nav>
            <bucket-page></bucket-page>
            <div class="help"><svg class="ic" width="16" height="16" viewBox="0 0 16 16" fill="none" stroke="currentColor" stroke-width="1.900"><circle cx="8" cy="8" r="7"></circle><path d="M8 3.500v2M6 7.200h2v4.300M5.700 11.500h4.600"></path></svg></div>
          </div>
          <div class="foot row">
            <span>Feedback</span><span class="hint">Looking for language selection? Find it in the new </span><span class="unified">Unified Settings</span><span style="margin-left:2px">${stroke(P.external, 16, 2)}</span>
            <span class="grow"></span>
            <span style="margin-right:5px">© 2022, Amazon Web Services, Inc. or its affiliates.</span><span class="link">Privacy</span><span class="link">Terms</span><span class="link">Cookie preferences</span>
          </div>
        </div>
        <div class="scroll">
          <div><svg class="ic" width="13" height="5" viewBox="0 0 13 5"><path d="M2.500 5h8l-4-5z" fill="#a3a3a3"></path></svg><div class="thumb"></div></div>
          <svg class="ic" width="9" height="5" viewBox="0 0 9 5"><path d="M.500 0h8l-4 5z" fill="#505050"></path></svg>
        </div>
      </div>
      <task-bar></task-bar>
      <div class="mark"><div>Activate Windows</div>Go to Settings to activate Windows.</div>`;
  }
}
